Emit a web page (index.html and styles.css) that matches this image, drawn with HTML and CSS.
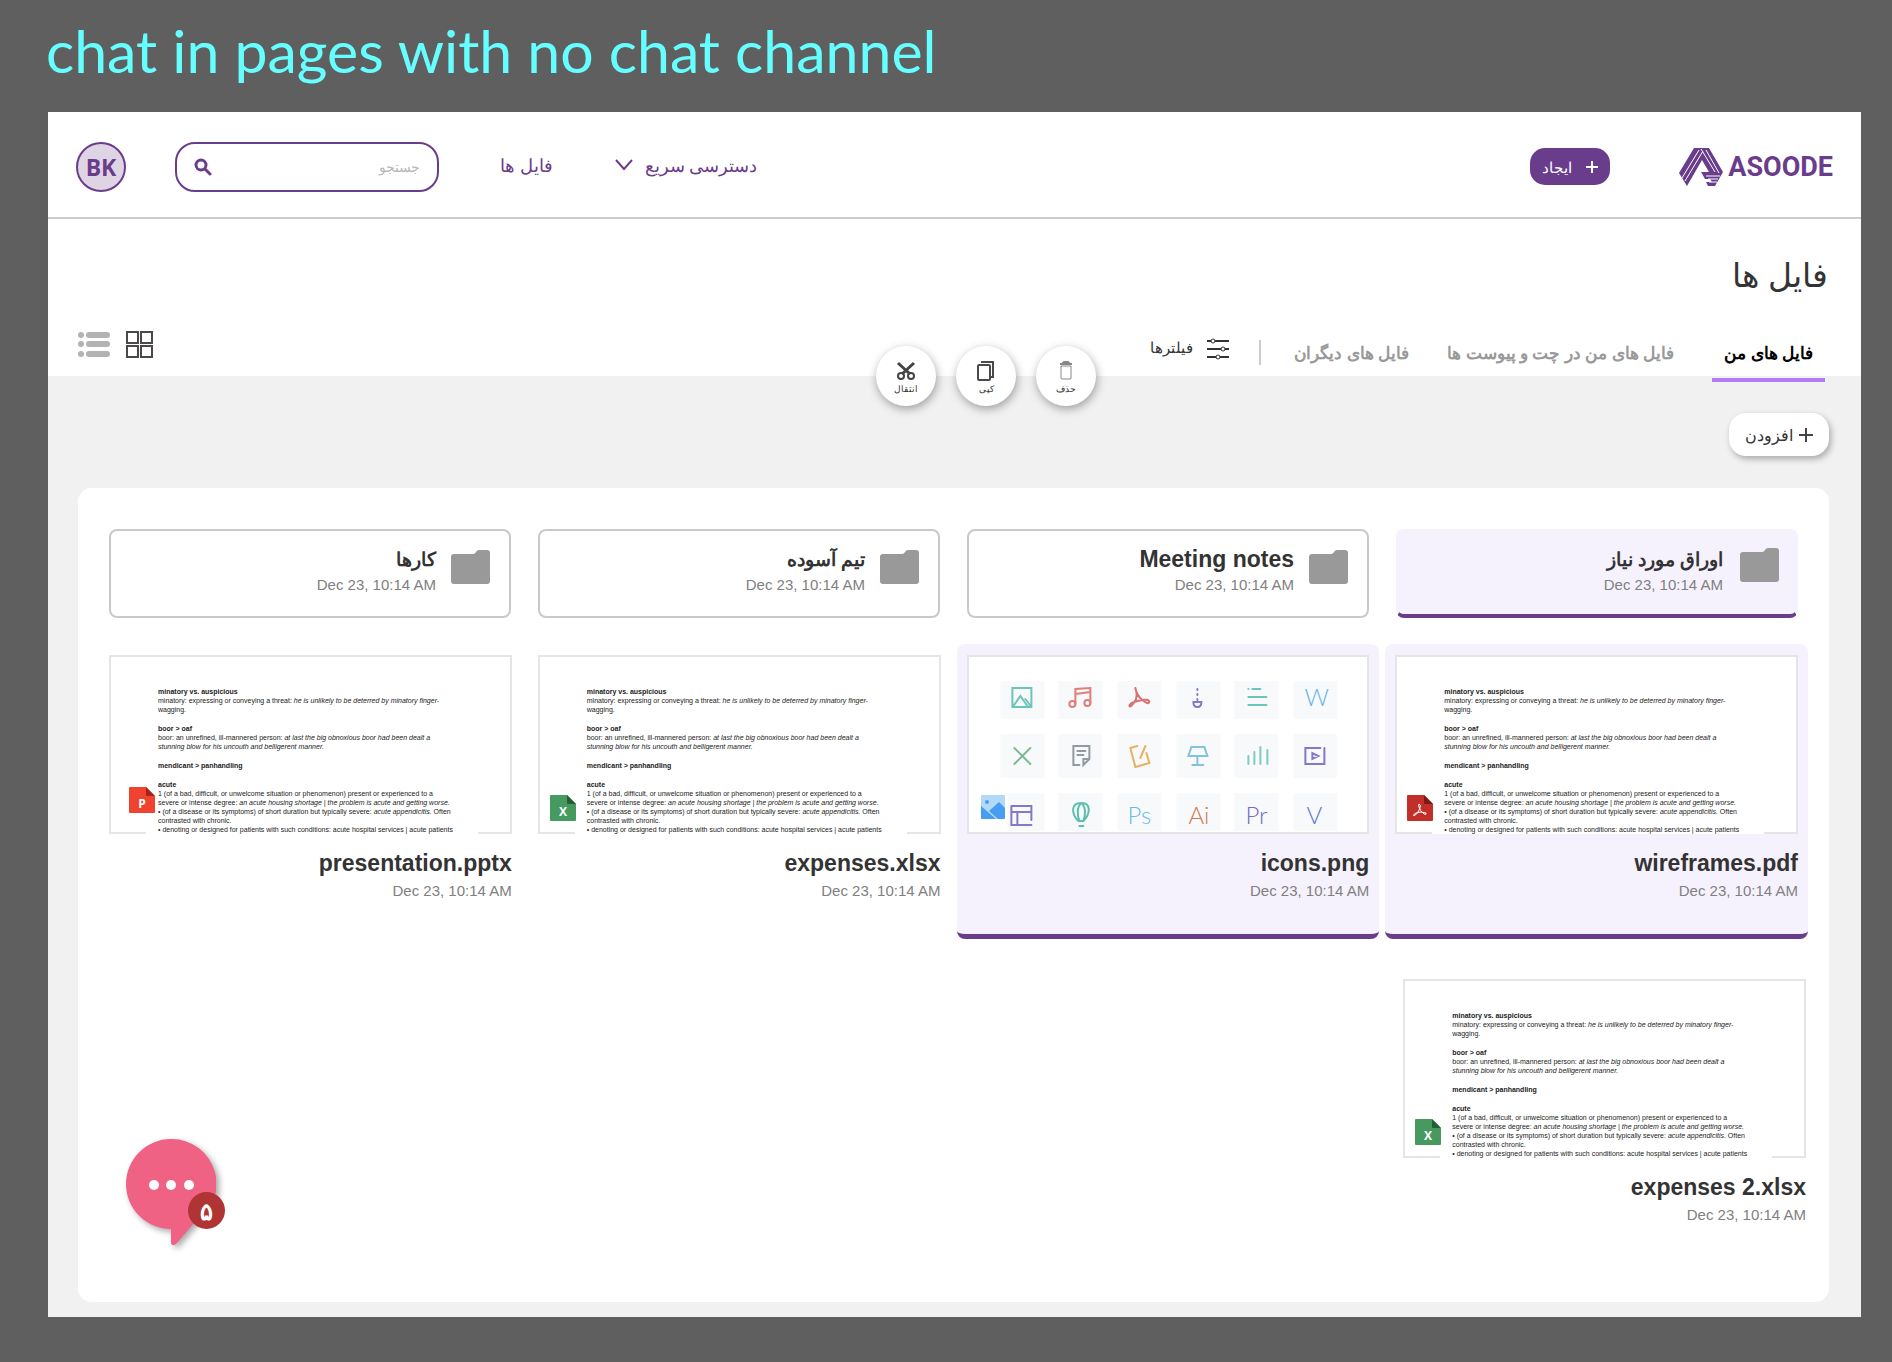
FILE: index.html
```html
<!DOCTYPE html>
<html lang="fa">
<head>
<meta charset="utf-8">
<meta name="viewport" content="width=device-width, initial-scale=1">
<title>Asoode - فایل ها</title>
<link rel="stylesheet" href="styles.css">
</head>
<body>
<h1 class="board-title" lang="en">chat in pages with no chat channel</h1>

<div class="app" dir="rtl">
  <header class="topbar">
    <a class="logo" href="#" dir="ltr">
      <svg class="logo-mark" viewBox="0 0 44 38" aria-hidden="true">
        <path fill="#6a3d8c" d="M15 0H30L44 24L36 38H29L27 34H33L31 31H26L22 24H30L23 12L8 38L0 25Z"/>
        <path fill="none" stroke="#fff" stroke-width="1" d="M20 2L3 30M24 3L6 33M22 1L36 24M27 2L40 25M27 28H41M29 31H39M30 34H38"/>
      </svg>
      <span class="logo-text">ASOODE</span>
    </a>
    <button class="create" type="button">
      <svg width="12" height="12" viewBox="0 0 12 12" aria-hidden="true"><path d="M6 0V12M0 6H12" stroke="#fff" stroke-width="2"/></svg>
      <span>ایجاد</span>
    </button>
    <nav class="mainnav">
      <button class="quick" type="button">
        <span>دسترسی سریع</span>
        <svg width="18" height="12" viewBox="0 0 18 12" aria-hidden="true"><path d="M1 1L9 10L17 1" fill="none" stroke="#6a3d8c" stroke-width="2"/></svg>
      </button>
      <a class="navlink" href="#">فایل ها</a>
    </nav>
    <form class="search">
      <input class="search-input" type="search" placeholder="جستجو" aria-label="جستجو">
      <button class="search-btn" type="submit" aria-label="جستجو">
        <svg width="18" height="18" viewBox="0 0 18 18" aria-hidden="true"><circle cx="7" cy="7" r="5" fill="none" stroke="#6a3d8c" stroke-width="3"/><path d="M11 11L16 16" stroke="#6a3d8c" stroke-width="3" stroke-linecap="round"/></svg>
      </button>
    </form>
    <a class="avatar" href="#">BK</a>
  </header>

  <section class="heading">
    <h2 class="page-title">فایل ها</h2>
    <div class="toolbar">
      <nav class="tabs">
        <a class="tab tab-active" href="#">فایل های من</a>
        <a class="tab" href="#">فایل های من در چت و پیوست ها</a>
        <a class="tab" href="#">فایل های دیگران</a>
      </nav>
      <span class="divider"></span>
      <button class="filters" type="button">
        <svg width="22" height="22" viewBox="0 0 22 22" aria-hidden="true"><path d="M0 3H22M0 11H22M0 19H22" stroke="#333" stroke-width="2"/><g fill="#fff" stroke="#333"><circle cx="6" cy="3" r="2"/><circle cx="16" cy="11" r="2"/><circle cx="11" cy="19" r="2"/></g></svg>
        <span>فیلترها</span>
      </button>
      <div class="actions">
        <button class="action" type="button">
          <svg width="20" height="20" viewBox="0 0 20 20" aria-hidden="true"><g fill="none" stroke="#888"><path d="M5 5H15V17Q15 18 14 18H6Q5 18 5 17Z"/><path d="M4 3H16M6 3L8 1H12L14 3" stroke-width="2"/></g></svg>
          <span>حذف</span>
        </button>
        <button class="action" type="button">
          <svg width="20" height="20" viewBox="0 0 20 20" aria-hidden="true"><g fill="none" stroke="#4a4a4a"><rect x="2" y="4" width="12" height="15" rx="1" stroke-width="2"/><path d="M5 1H17V16H15" stroke-width="2"/></g></svg>
          <span>کپی</span>
        </button>
        <button class="action" type="button">
          <svg width="20" height="20" viewBox="0 0 20 20" aria-hidden="true"><g fill="none" stroke="#444"><path d="M2 2L14 13M18 2L6 13" stroke-width="3"/><circle cx="5" cy="15" r="3" stroke-width="2"/><circle cx="15" cy="15" r="3" stroke-width="2"/></g></svg>
          <span>انتقال</span>
        </button>
      </div>
      <div class="views">
        <button class="view" type="button" aria-label="شبکه">
          <svg width="27" height="27" viewBox="0 0 27 27" aria-hidden="true"><g fill="none" stroke="#4d4848" stroke-width="2"><rect x="1" y="1" width="11" height="11"/><rect x="15" y="1" width="11" height="11"/><rect x="1" y="15" width="11" height="11"/><rect x="15" y="15" width="11" height="11"/></g></svg>
        </button>
        <button class="view" type="button" aria-label="فهرست">
          <svg width="32" height="27" viewBox="0 0 32 27" aria-hidden="true"><g fill="#b3b3b3"><circle cx="3" cy="4" r="3"/><circle cx="3" cy="13" r="3"/><circle cx="3" cy="23" r="3"/><rect x="8" y="1" width="24" height="6" rx="3"/><rect x="8" y="10" width="24" height="6" rx="3"/><rect x="8" y="20" width="24" height="6" rx="3"/></g></svg>
        </button>
      </div>
    </div>
  </section>

  <main class="content">
    <button class="add" type="button">
      <svg width="14" height="14" viewBox="0 0 14 14" aria-hidden="true"><path d="M7 0V14M0 7H14" stroke="#444" stroke-width="2"/></svg>
      <span>افزودن</span>
    </button>

    <div class="panel">
      <div class="folders">
        <article class="folder folder-selected">
          <svg class="folder-icon" viewBox="0 0 39 34" aria-hidden="true"><path fill="#999" d="M3 4H22Q24 4 25 2Q26 0 28 0H36Q39 0 39 3V31Q39 34 36 34H3Q0 34 0 31V7Q0 4 3 4Z"/></svg>
          <div><h3 class="name name-fa">اوراق مورد نیاز</h3><time class="date" dir="ltr">Dec 23, 10:14 AM</time></div>
        </article>
        <article class="folder">
          <svg class="folder-icon" viewBox="0 0 39 34" aria-hidden="true"><path fill="#999" d="M3 4H22Q24 4 25 2Q26 0 28 0H36Q39 0 39 3V31Q39 34 36 34H3Q0 34 0 31V7Q0 4 3 4Z"/></svg>
          <div><h3 class="name">Meeting notes</h3><time class="date" dir="ltr">Dec 23, 10:14 AM</time></div>
        </article>
        <article class="folder">
          <svg class="folder-icon" viewBox="0 0 39 34" aria-hidden="true"><path fill="#999" d="M3 4H22Q24 4 25 2Q26 0 28 0H36Q39 0 39 3V31Q39 34 36 34H3Q0 34 0 31V7Q0 4 3 4Z"/></svg>
          <div><h3 class="name name-fa">تیم آسوده</h3><time class="date" dir="ltr">Dec 23, 10:14 AM</time></div>
        </article>
        <article class="folder">
          <svg class="folder-icon" viewBox="0 0 39 34" aria-hidden="true"><path fill="#999" d="M3 4H22Q24 4 25 2Q26 0 28 0H36Q39 0 39 3V31Q39 34 36 34H3Q0 34 0 31V7Q0 4 3 4Z"/></svg>
          <div><h3 class="name name-fa">کارها</h3><time class="date" dir="ltr">Dec 23, 10:14 AM</time></div>
        </article>
      </div>

      <div class="files">
        <article class="file file-selected">
          <div class="thumb" dir="ltr">
            <div class="doc" lang="en">
              <p><b>minatory vs. auspicious</b><br>minatory: expressing or conveying a threat: <i>he is unlikely to be deterred by minatory finger-<br></i>wagging.</p>
              <p><b>boor &gt; oaf</b><br>boor: an unrefined, ill-mannered person: <i>at last the big obnoxious boor had been dealt a<br>stunning blow for his uncouth and belligerent manner.</i></p>
              <p><b>mendicant &gt; panhandling</b></p>
              <p><b>acute</b><br>1 (of a bad, difficult, or unwelcome situation or phenomenon) present or experienced to a<br>severe or intense degree: <i>an acute housing shortage | the problem is acute and getting worse.</i><br>• (of a disease or its symptoms) of short duration but typically severe: <i>acute appendicitis.</i> Often<br>contrasted with chronic.<br>• denoting or designed for patients with such conditions: acute hospital services | acute patients</p>
            </div>
            <svg class="type" viewBox="0 0 26 26" aria-hidden="true"><path fill="#c22f28" d="M1 0H17L26 9V25Q26 26 25 26H1Q0 26 0 25V1Q0 0 1 0Z"/><path fill="#7c1a17" d="M17 0L26 9H18Q17 9 17 8Z"/><path fill="none" stroke="#fff" d="M12 9Q14 9 13 13Q11 19 7 21Q5 20 9 18Q14 16 19 18Q20 20 17 19Q13 16 12 12Q11 10 12 9Z"/></svg>
          </div>
          <h3 class="name" dir="ltr">wireframes.pdf</h3><time class="date" dir="ltr">Dec 23, 10:14 AM</time>
        </article>

        <article class="file file-selected">
          <div class="thumb" dir="ltr">
            <svg class="sheet" viewBox="0 0 398 175" aria-hidden="true">
              <g fill="#f8f9fb">
                <rect x="31" y="24" width="44" height="38"/><rect x="89" y="24" width="44" height="38"/><rect x="148" y="24" width="44" height="38"/><rect x="207" y="24" width="44" height="38"/><rect x="265" y="24" width="44" height="38"/><rect x="324" y="24" width="44" height="38"/>
                <rect x="31" y="77" width="44" height="44" rx="2"/><rect x="89" y="77" width="44" height="44" rx="2"/><rect x="148" y="77" width="44" height="44" rx="2"/><rect x="207" y="77" width="44" height="44" rx="2"/><rect x="265" y="77" width="44" height="44" rx="2"/><rect x="324" y="77" width="44" height="44" rx="2"/>
                <rect x="38" y="136" width="37" height="38"/><rect x="89" y="136" width="44" height="38"/><rect x="148" y="136" width="44" height="38"/><rect x="207" y="136" width="44" height="38"/><rect x="265" y="136" width="44" height="38"/><rect x="324" y="136" width="44" height="38"/>
              </g>
              <g fill="none" stroke-width="2" stroke-linecap="round">
                <path stroke="#6cc5b9" d="M43 31H62V50H43ZM44 49L51 39L58 49M56 42L62 50"/>
                <g stroke="#dd7f7b"><path d="M106 47V32L121 31V46M106 37L121 35"/><circle cx="103" cy="47" r="3"/><circle cx="118" cy="46" r="3"/></g>
                <path stroke="#d9716c" d="M166 31Q169 40 165 45Q161 51 160 49Q160 46 168 44Q180 41 180 45Q179 48 173 43Q167 38 166 31"/>
                <path stroke="#8478cb" d="M228 32V33M228 37V38M228 42V43M224 45H232Q232 50 228 50Q224 50 224 45Z"/>
                <path stroke="#6cc5b9" d="M279 32H279M283 32H291M279 40H297M279 48H297"/>
                <path stroke="#7dba93" d="M45 91L61 107M61 91L45 107"/>
                <path stroke="#929aa3" d="M110 108H104V89H120V102L114 108V102H120M108 94H116M108 98H114"/>
                <path stroke="#e6b160" d="M168 89L161 91L166 110L180 106L177 96M176 89L171 101"/>
                <path stroke="#83c3dc" d="M222 90H235L238 99H219ZM228 99V108M223 108H234"/>
                <path stroke="#7fcbc2" d="M279 99V107M285 95V107M291 90V107M298 93V107"/>
                <path stroke="#8478cb" d="M351 91H336V107H355V91M343 96V102L349 99Z"/>
                <path stroke="#8478cb" d="M42 149H62V163M62 168H42V149M43 155H62M48 155V168"/>
                <path stroke="#5cbfae" d="M112 146C101 146 102 157 109 164H114C121 157 122 146 112 146C107 150 108 159 110 164M112 146C117 150 116 159 114 164M110 169H114"/>
              </g>
              <g class="sheet-text">
                <text x="335" y="49" fill="#69b6e6">W</text>
                <text x="158" y="167" fill="#69baee">Ps</text>
                <text x="219" y="167" fill="#d07a52">Ai</text>
                <text x="276" y="167" fill="#7568c6">Pr</text>
                <text x="337" y="167" fill="#5f78d2">V</text>
              </g>
            </svg>
            <svg class="type" viewBox="0 0 26 26" aria-hidden="true"><rect x="1" width="25" height="26" fill="#fff"/><rect x="2" y="0" width="24" height="24" rx="1" fill="#b3d9f9"/><circle cx="8" cy="7" r="2" fill="#469df1"/><path fill="#469df1" d="M2 11L17 24H3Q2 24 2 23ZM10 16L20 7L26 13V23Q26 24 25 24H19Z"/></svg>
          </div>
          <h3 class="name" dir="ltr">icons.png</h3><time class="date" dir="ltr">Dec 23, 10:14 AM</time>
        </article>

        <article class="file">
          <div class="thumb" dir="ltr">
            <div class="doc" lang="en">
              <p><b>minatory vs. auspicious</b><br>minatory: expressing or conveying a threat: <i>he is unlikely to be deterred by minatory finger-<br></i>wagging.</p>
              <p><b>boor &gt; oaf</b><br>boor: an unrefined, ill-mannered person: <i>at last the big obnoxious boor had been dealt a<br>stunning blow for his uncouth and belligerent manner.</i></p>
              <p><b>mendicant &gt; panhandling</b></p>
              <p><b>acute</b><br>1 (of a bad, difficult, or unwelcome situation or phenomenon) present or experienced to a<br>severe or intense degree: <i>an acute housing shortage | the problem is acute and getting worse.</i><br>• (of a disease or its symptoms) of short duration but typically severe: <i>acute appendicitis.</i> Often<br>contrasted with chronic.<br>• denoting or designed for patients with such conditions: acute hospital services | acute patients</p>
            </div>
            <svg class="type" viewBox="0 0 26 26" aria-hidden="true"><path fill="#469a5f" d="M1 0H17L26 9V25Q26 26 25 26H1Q0 26 0 25V1Q0 0 1 0Z"/><path fill="#245e35" d="M17 0L26 9H18Q17 9 17 8Z"/><text class="type-letter" x="13" y="21">X</text></svg>
          </div>
          <h3 class="name" dir="ltr">expenses.xlsx</h3><time class="date" dir="ltr">Dec 23, 10:14 AM</time>
        </article>

        <article class="file">
          <div class="thumb" dir="ltr">
            <div class="doc" lang="en">
              <p><b>minatory vs. auspicious</b><br>minatory: expressing or conveying a threat: <i>he is unlikely to be deterred by minatory finger-<br></i>wagging.</p>
              <p><b>boor &gt; oaf</b><br>boor: an unrefined, ill-mannered person: <i>at last the big obnoxious boor had been dealt a<br>stunning blow for his uncouth and belligerent manner.</i></p>
              <p><b>mendicant &gt; panhandling</b></p>
              <p><b>acute</b><br>1 (of a bad, difficult, or unwelcome situation or phenomenon) present or experienced to a<br>severe or intense degree: <i>an acute housing shortage | the problem is acute and getting worse.</i><br>• (of a disease or its symptoms) of short duration but typically severe: <i>acute appendicitis.</i> Often<br>contrasted with chronic.<br>• denoting or designed for patients with such conditions: acute hospital services | acute patients</p>
            </div>
            <svg class="type type-slides" viewBox="0 0 26 26" aria-hidden="true"><path fill="#ef432f" d="M1 0H17L26 9V25Q26 26 25 26H1Q0 26 0 25V1Q0 0 1 0Z"/><path fill="#a3241a" d="M17 0L26 9H18Q17 9 17 8Z"/><text class="type-letter" x="13" y="21">P</text></svg>
          </div>
          <h3 class="name" dir="ltr">presentation.pptx</h3><time class="date" dir="ltr">Dec 23, 10:14 AM</time>
        </article>
      </div>

      <div class="files files-more">
        <article class="file">
          <div class="thumb" dir="ltr">
            <div class="doc" lang="en">
              <p><b>minatory vs. auspicious</b><br>minatory: expressing or conveying a threat: <i>he is unlikely to be deterred by minatory finger-<br></i>wagging.</p>
              <p><b>boor &gt; oaf</b><br>boor: an unrefined, ill-mannered person: <i>at last the big obnoxious boor had been dealt a<br>stunning blow for his uncouth and belligerent manner.</i></p>
              <p><b>mendicant &gt; panhandling</b></p>
              <p><b>acute</b><br>1 (of a bad, difficult, or unwelcome situation or phenomenon) present or experienced to a<br>severe or intense degree: <i>an acute housing shortage | the problem is acute and getting worse.</i><br>• (of a disease or its symptoms) of short duration but typically severe: <i>acute appendicitis.</i> Often<br>contrasted with chronic.<br>• denoting or designed for patients with such conditions: acute hospital services | acute patients</p>
            </div>
            <svg class="type" viewBox="0 0 26 26" aria-hidden="true"><path fill="#469a5f" d="M1 0H17L26 9V25Q26 26 25 26H1Q0 26 0 25V1Q0 0 1 0Z"/><path fill="#245e35" d="M17 0L26 9H18Q17 9 17 8Z"/><text class="type-letter" x="13" y="21">X</text></svg>
          </div>
          <h3 class="name" dir="ltr">expenses 2.xlsx</h3><time class="date" dir="ltr">Dec 23, 10:14 AM</time>
        </article>
      </div>
    </div>

    <button class="chat" type="button" aria-label="چت">
      <svg class="chat-bubble" viewBox="0 0 90 106" aria-hidden="true"><path fill="#ef6284" d="M45 0A45 45 0 0 1 68 84L50 105Q45 108 45 103V90A45 45 0 0 1 45 0Z"/><g fill="#fff"><circle cx="28" cy="46" r="5"/><circle cx="45" cy="46" r="5"/><circle cx="63" cy="46" r="5"/></g></svg>
      <span class="chat-count">۵</span>
    </button>
  </main>
</div>
</body>
</html>
```
FILE: styles.css
```css
* { box-sizing: border-box; }

body {
  margin: 0;
  padding: 0 31px 45px 46px;
  background: #5f5f5f;
  color: #333;
  font-family: "Noto Sans", sans-serif;
}

h1, h2, h3, p { margin: 0; font-weight: inherit; }
a { color: inherit; text-decoration: none; }
button { margin: 0; padding: 0; border: 0; background: none; color: inherit; font: inherit; cursor: pointer; }
svg { display: block; flex: none; }

.board-title {
  padding-bottom: 10px;
  color: #6ff;
  font: 59px/102px Lato, sans-serif;
}

.app { margin-left: 2px; background: #fff; }

/* Top bar */
.topbar {
  display: flex;
  align-items: center;
  height: 107px;
  padding: 4px 28px 0;
  border-bottom: 2px solid #ccc;
  color: #6a3d8c;
}
.logo { display: flex; align-items: center; gap: 5px; }
.logo-mark { width: 44px; height: 38px; }
.logo-text { font: bold 27px/38px Roboto, sans-serif; }
.create {
  display: flex;
  align-items: center;
  justify-content: center;
  gap: 14px;
  width: 80px;
  height: 37px;
  margin-right: 69px;
  border-radius: 15px;
  background: #6a3d8c;
  color: #fff;
  font-size: 15px;
}
.mainnav {
  display: flex;
  align-items: center;
  gap: 62px;
  margin-right: auto;
  padding-bottom: 4px;
  font-size: 18px;
  line-height: 28px;
  font-weight: 500;
}
.quick { display: flex; align-items: center; gap: 12px; }
.search {
  display: flex;
  align-items: center;
  width: 264px;
  height: 50px;
  margin: 0 61px 0 49px;
  padding: 0 17px;
  border: 2px solid #6a3d8c;
  border-radius: 20px;
}
.search-input {
  flex: 1;
  min-width: 0;
  padding: 0;
  border: 0;
  outline: 0;
  background: none;
  font: 14px/24px "Noto Sans", sans-serif;
}
.search-input::placeholder { color: #b5b5b5; opacity: 1; }
.avatar {
  width: 50px;
  height: 50px;
  border: 2px solid #6a3d8c;
  border-radius: 50%;
  background: #dfd4e4;
  font: bold 23px/46px "Open Sans", sans-serif;
  text-align: center;
}

/* Page heading */
.heading { position: relative; z-index: 1; padding: 34px 33px 0 30px; }
.page-title { font-size: 33px; line-height: 44px; }
.toolbar { display: flex; align-items: flex-end; height: 79px; }
.tabs { display: flex; gap: 38px; margin-right: 3px; font-size: 17px; line-height: 26px; font-weight: bold; color: #999; }
.tab { padding-bottom: 10px; }
.tab-active { position: relative; padding: 0 12px 10px; color: #000; }
.tab-active::after {
  content: "";
  position: absolute;
  right: 0;
  bottom: -6px;
  left: 0;
  height: 4px;
  background: #b57bf5;
}
.divider { width: 2px; height: 25px; margin: 0 33px 11px 30px; background: #ccc; }
.filters { display: flex; align-items: center; gap: 14px; padding-bottom: 12px; font-size: 15px; line-height: 26px; }
.filters span { padding-bottom: 4px; }
.actions { display: flex; gap: 20px; margin: 0 54px -30px 0; }
.action {
  display: flex;
  flex-direction: column;
  align-items: center;
  gap: 1px;
  width: 60px;
  height: 60px;
  padding-top: 15px;
  border-radius: 50%;
  background: #fff;
  box-shadow: 1px 3px 10px rgba(0, 0, 0, .35);
  font-size: 9px;
  line-height: 14px;
}
.views { display: flex; align-items: center; gap: 16px; margin: 0 auto 18px 0; }

/* Files */
.content { position: relative; padding: 37px 32px 15px 30px; background: #f1f1f1; }
.add {
  display: flex;
  align-items: center;
  justify-content: center;
  gap: 6px;
  width: 100px;
  height: 43px;
  border-radius: 17px;
  background: #fff;
  box-shadow: 2px 3px 6px rgba(0, 0, 0, .3);
  font-size: 16px;
}
.panel { margin-top: 32px; padding: 41px 0 39px; border-radius: 14px; background: #fff; }
.folders { display: grid; grid-template-columns: repeat(4, 1fr); gap: 27px; padding: 0 31px; }
.folder {
  display: flex;
  gap: 15px;
  height: 89px;
  padding: 14px 19px 0;
  border: 2px solid #c9c9c9;
  border-radius: 8px;
}
.folder-selected { gap: 17px; padding-right: 17px; border-color: #f6f2fd; border-bottom: 4px solid #6a3d8c; background: #f6f2fd; }
.folder-icon { width: 39px; height: 34px; margin-top: 5px; }
.folder-selected .folder-icon { margin-top: 3px; }
.name { font: bold 23px/28px "Liberation Sans", sans-serif; text-align: right; }
.name-fa { font: bold 19px/28px "Noto Sans", sans-serif; }
.date { display: block; color: #808080; font: 15px/24px "Liberation Sans", sans-serif; text-align: right; }

.files { display: grid; grid-template-columns: repeat(4, 1fr); gap: 6px; margin-top: 26px; padding: 0 21px; }
.files-more { margin-top: 29px; padding: 0 13px 0 29px; }
.file { height: 295px; padding: 11px 10px 0; border-bottom: 5px solid transparent; border-radius: 8px; }
.file-selected { border-bottom-color: #6a3d8c; background: #f6f2fd; }
.file .name { margin: 15px 0 2px; }
.thumb { position: relative; height: 179px; border: 2px solid #e4e6e6; background: #fff; }
.doc {
  width: 332px;
  max-width: 90%;
  height: 177px;
  margin-left: 35px;
  padding: 30px 0 0 12px;
  overflow: hidden;
  background: #fff;
  color: #222;
  font: 7px/9px "Liberation Sans", sans-serif;
  white-space: nowrap;
}
.doc p + p { margin-top: 10px; }
.type { position: absolute; top: 138px; left: 10px; width: 26px; height: 26px; }
.type-slides { top: 130px; left: 18px; }
.type-letter { fill: #fff; font: bold 12px "Open Sans", sans-serif; text-anchor: middle; }
.sheet { width: 100%; height: 100%; }
.sheet-text { font: 300 24px Lato, sans-serif; }

/* Chat launcher */
.chat { position: absolute; bottom: 72px; left: 78px; }
.chat-bubble { width: 90px; height: 106px; filter: drop-shadow(3px 3px 3px rgba(0, 0, 0, .35)); }
.chat-count {
  position: absolute;
  top: 53px;
  left: 62px;
  width: 37px;
  height: 37px;
  border-radius: 50%;
  background: #b13434;
  color: #fff;
  font-size: 24px;
  line-height: 37px;
  font-weight: bold;
}
```
